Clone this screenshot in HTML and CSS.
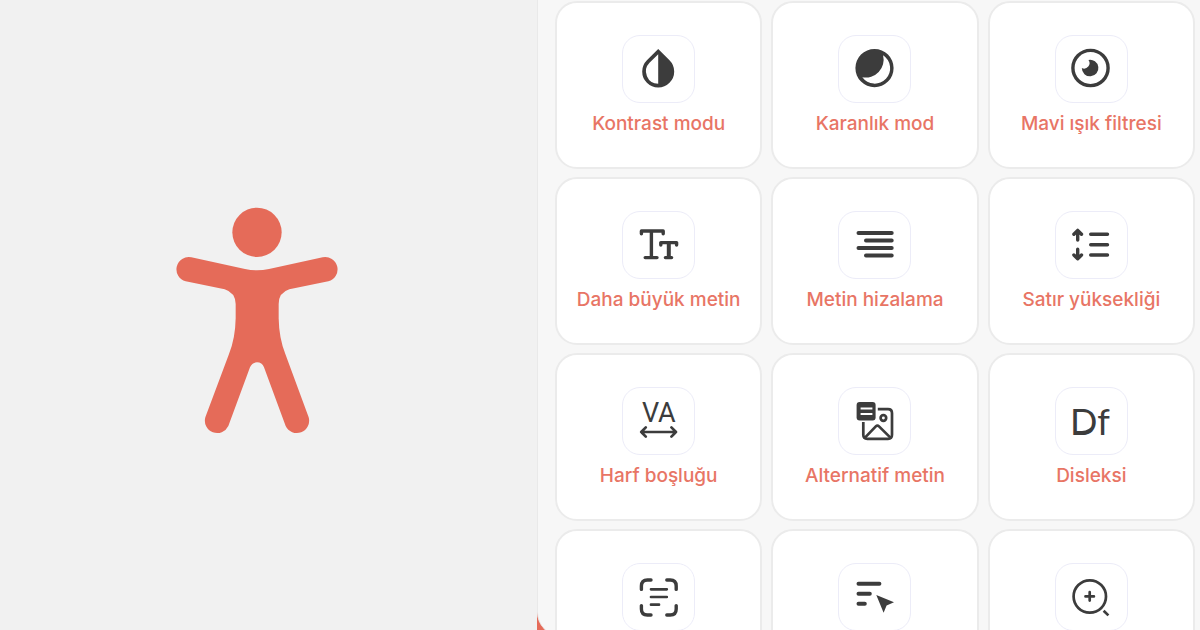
FILE: index.html
```html
<!DOCTYPE html>
<html lang="tr">
<head>
    <meta charset="UTF-8">
    <meta name="viewport" content="width=device-width, initial-scale=1.0">
    <title>Erişilebilirlik Menüsü</title>
    <link rel="stylesheet" href="styles.css">
</head>
<body>
    <main class="page">
        <section class="hero">
            <svg class="person" viewBox="48 51 486 682" role="img" aria-label="Erişilebilirlik">
                <circle cx="291" cy="127" r="74"/>
                <path d="M94 202L255 237Q291 245 327 237L488 202A37 37 0 0 1 505 274L388 298Q356 308 356 342V385Q357 445 376 492L446 682A37 37 0 0 1 377 708L312 532Q306 517 291 517Q276 517 270 532L205 708A37 37 0 0 1 136 682L207 492Q226 445 227 385V342Q226 308 194 298L77 274A37 37 0 0 1 94 202Z"/>
            </svg>
        </section>

        <section class="widget">
            <div class="options">
                <button class="card" type="button">
                    <span class="icon">
                        <svg viewBox="0 0 40 40">
                            <path class="solid" fill-rule="evenodd" d="M19.2 0L30.5 11.2A16 16 0 1 1 7.9 11.2ZM19.2 5.3L10.5 13.8A12.3 12.3 0 0 0 19.2 34.7Z"/>
                        </svg>
                    </span>
                    <span class="label">Kontrast modu</span>
                </button>

                <button class="card" type="button">
                    <span class="icon">
                        <svg viewBox="0 0 40 40">
                            <path class="solid" fill-rule="evenodd" d="M19.5 0A19 19 0 1 1 19.5 38.2A19 19 0 1 1 19.5 0ZM28.1 6.3A15.4 15.4 0 1 1 7.3 28.3A18 18 0 0 0 28.1 6.3Z"/>
                        </svg>
                    </span>
                    <span class="label">Karanlık mod</span>
                </button>

                <button class="card" type="button">
                    <span class="icon">
                        <svg viewBox="0 0 40 40">
                            <circle class="line" cx="19.5" cy="19" r="17.6"/>
                            <path class="solid" d="M17.5 10.9A8.3 8.3 0 1 1 10.8 19.1A5.5 5.5 0 0 0 17.5 10.9Z"/>
                        </svg>
                    </span>
                    <span class="label">Mavi ışık filtresi</span>
                </button>

                <button class="card" type="button">
                    <span class="icon">
                        <svg viewBox="0 0 40 40">
                            <path class="line" d="M2.4 8.8V6H24.2V8.8M12.4 6V32.6M6.2 32.6H18"/>
                            <path class="line" d="M21.8 20V17.6H37.6V20M26.4 32.6H32.6"/>
                            <path class="line bold" d="M29.8 18V32"/>
                        </svg>
                    </span>
                    <span class="label">Daha büyük metin</span>
                </button>

                <button class="card" type="button">
                    <span class="icon">
                        <svg viewBox="0 0 40 40">
                            <path class="line bold" d="M3.5 8H36.7M11 15.4H36.7M3.5 23H36.7M11 30.4H36.7"/>
                        </svg>
                    </span>
                    <span class="label">Metin hizalama</span>
                </button>

                <button class="card" type="button">
                    <span class="icon">
                        <svg viewBox="0 0 40 40">
                            <path class="line" d="M19.7 9.3H36.5M19.7 19.7H36.5M19.7 30H36.5"/>
                            <path class="line" d="M6.7 15V5.4M2.9 9.2L6.7 5.4L10.5 9.2M6.7 24.2V33.8M2.9 30L6.7 33.8L10.5 30"/>
                        </svg>
                    </span>
                    <span class="label">Satır yüksekliği</span>
                </button>

                <button class="card" type="button">
                    <span class="icon">
                        <svg viewBox="0 0 40 40">
                            <text class="letters spacing" x="19.8" y="21" text-anchor="middle">VA</text>
                            <path class="line thin" d="M2.2 31H37M6.8 26.4L2.2 31L6.8 35.6M32.4 26.4L37 31L32.4 35.6"/>
                        </svg>
                    </span>
                    <span class="label">Harf boşluğu</span>
                </button>

                <button class="card" type="button">
                    <span class="icon">
                        <svg viewBox="0 0 40 40">
                            <rect class="solid" x="1.6" y="1" width="19" height="18.4" rx="3"/>
                            <path class="cut" d="M5.6 7.6H17.4M5.6 13H17.4"/>
                            <path class="line thin butt" d="M22.8 8.2H33Q37 8.2 37 12.2V33.8Q37 37.8 33 37.8H12.3Q8.3 37.8 8.3 33.8V21"/>
                            <circle class="line thin" cx="28.4" cy="17" r="2.8"/>
                            <path class="line thin" d="M10 36.6L20.8 25.4Q22.4 23.8 24 25.4L35.4 36.6"/>
                        </svg>
                    </span>
                    <span class="label">Alternatif metin</span>
                </button>

                <button class="card" type="button">
                    <span class="icon">
                        <svg viewBox="0 0 40 40">
                            <text class="letters dyslexia" x="19" y="34" text-anchor="middle">Df</text>
                            <!-- weighted base of the D -->
                            <path class="solid" d="M3 30H11Q18 29.6 23.4 23Q21.4 34 10.6 34H3Z"/>
                        </svg>
                    </span>
                    <span class="label">Disleksi</span>
                </button>

                <button class="card" type="button">
                    <span class="icon">
                        <svg viewBox="0 0 40 40">
                            <path class="line" d="M12 3H8.4Q2.4 3 2.4 9V12.4M27.8 3H31.2Q37.2 3 37.2 9V12.4M2.4 28.6V32Q2.4 38 8.4 38H12M37.2 28.6V32Q37.2 38 31.2 38H27.8"/>
                            <path class="line thin" d="M12 12.3H27.8M12 20H27.8M12 27.7H20"/>
                        </svg>
                    </span>
                </button>

                <button class="card" type="button">
                    <span class="icon">
                        <svg viewBox="0 0 40 40">
                            <path class="line bold" d="M3.5 6.7H24.4M3.5 16.7H14.8M3.5 26.7H9.8"/>
                            <path class="solid" d="M21.3 18L39 25.3L31.6 28.6L28.6 35.7Z"/>
                        </svg>
                    </span>
                </button>

                <button class="card" type="button">
                    <span class="icon">
                        <svg viewBox="0 0 40 40">
                            <circle class="line thin" cx="18.8" cy="19.5" r="16.2"/>
                            <path class="line thin" d="M14.5 19.4H22.9M18.7 15.2V23.6"/>
                            <path class="line thin butt" d="M32.6 33.8L37.4 38.4"/>
                        </svg>
                    </span>
                </button>
            </div>
        </section>
    </main>
</body>
</html>
```
FILE: styles.css
```css
* {
    box-sizing: border-box;
}

body {
    margin: 0;
    font-family: Inter, "Noto Sans", sans-serif;
    background-color: #f1f1f1;
}

.page {
    display: flex;
    height: 100vh;
    overflow: hidden;
}

.hero {
    display: flex;
    align-items: center;
    justify-content: center;
    width: 44.75%;
    padding: 12px 24px 0 0;
}

.person {
    width: 162px;
    fill: #e56b59;
}

/* Red base shows behind the rounded corner of the list */
.widget {
    flex: 1;
    background-color: #e56b59;
}

.options {
    display: grid;
    grid-template-columns: repeat(3, 1fr);
    grid-auto-rows: 168px;
    gap: 8px 9px;
    height: calc(100% + 6px);
    padding: 1px 5px 0 17px;
    overflow: hidden;
    background-color: #f7f7f7;
    border-left: 1px solid #e9e9e9;
    border-bottom-left-radius: 24px;
}

.card {
    display: flex;
    flex-direction: column;
    align-items: center;
    gap: 7px;
    padding: 32px 0 0;
    background-color: #fff;
    border: 2px solid #ebebeb;
    border-radius: 22px;
    font-family: inherit;
    cursor: pointer;
}

.card:hover {
    border-color: #e56b59;
}

.icon {
    display: flex;
    align-items: center;
    justify-content: center;
    width: 73px;
    height: 68px;
    border: 1px solid #ececf8;
    border-radius: 18px;
}

.icon svg {
    width: 40px;
    height: 40px;
    overflow: visible;
}

.label {
    font-size: 19px;
    font-weight: 550;
    line-height: 28px;
    color: #e87565;
    white-space: nowrap;
}

/* Icon strokes */
.solid {
    fill: #3c3c3c;
}

.line {
    fill: none;
    stroke: #3c3c3c;
    stroke-width: 3.4;
    stroke-linecap: round;
    stroke-linejoin: round;
}

.bold {
    stroke-width: 4;
}

.thin {
    stroke-width: 2.7;
}

.butt {
    stroke-linecap: butt;
}

.cut {
    stroke: #fff;
    stroke-width: 2;
}

.letters {
    fill: #3c3c3c;
}

.spacing {
    font-family: Roboto, sans-serif;
    font-size: 27px;
}

.dyslexia {
    font-family: Lato, sans-serif;
    font-size: 36px;
}
```
